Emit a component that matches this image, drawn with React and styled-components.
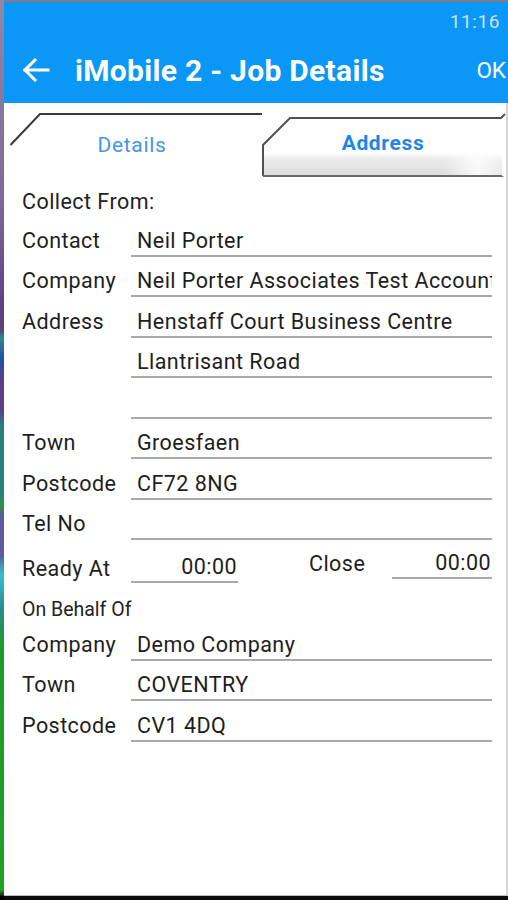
import React from "react";
import styled, { createGlobalStyle } from "styled-components";

const GlobalStyle = createGlobalStyle`
  html, body { margin: 0; padding: 0; background: #000; }
  body { font-family: Roboto, "Noto Sans", "Liberation Sans", sans-serif; }
  * { box-sizing: border-box; }
`;

const Frame = styled.div`
  width: 508px;
  height: 900px;
  display: flex;
  overflow: hidden;
  background: #000;
`;

const LeftEdge = styled.div`
  width: 4px;
  height: 896px;
  flex: none;
  background: linear-gradient(
    to bottom,
    #8f88a6 0px,
    #7d6a98 200px,
    #5e4484 300px,
    #5a3f7c 330px,
    #2a8a8a 338px,
    #2050a8 360px,
    #5a3f8a 380px,
    #5a3f8a 410px,
    #2a7f80 425px,
    #2a7f80 495px,
    #2a9a3a 505px,
    #5a5aa0 515px,
    #5a5aa0 555px,
    #38c0d0 575px,
    #2a8a8a 610px,
    #1f9a2a 645px,
    #22a022 890px,
    #1a1a1a 896px
  );
`;

const Main = styled.div`
  flex: 1;
  display: flex;
  flex-direction: column;
  height: 900px;
`;

const TopStrip = styled.div`
  height: 2px;
  background: #7d7a8c;
`;

const Header = styled.header`
  background: #0b97f5;
  height: 101px;
  display: flex;
  flex-direction: column;
`;

const StatusBar = styled.div`
  height: 38px;
  display: flex;
  align-items: center;
  justify-content: flex-end;
  padding-right: 8px;
  font-size: 19px;
  color: rgba(235, 242, 250, 0.85);
  letter-spacing: 0.6px;
`;

const ActionBar = styled.div`
  height: 63px;
  display: flex;
  align-items: center;
  padding-left: 18px;
  padding-bottom: 3px;
`;

const BackIcon = styled.svg`
  width: 28px;
  height: 24px;
  flex: none;
`;

const Title = styled.h1`
  margin: 0 0 0 25px;
  flex: 1;
  font-size: 30px;
  font-weight: 700;
  letter-spacing: 0.3px;
  color: #fff;
  white-space: nowrap;
`;

const OkButton = styled.span`
  font-size: 22.5px;
  color: #fff;
  padding-right: 2px;
`;

const Body = styled.div`
  flex: 1;
  display: flex;
  flex-direction: column;
  background: #fff;
  border-right: 2px solid #d4d4d4;
  border-bottom: 1px solid #bdbdbd;
`;

const TabStrip = styled.div`
  height: 74px;
  display: flex;
  padding: 10px 0 0 6px;
`;

const Tab = styled.div`
  position: relative;
  width: ${(p) => p.$w}px;
  flex: none;
  display: flex;
  justify-content: center;
  padding-top: ${(p) => p.$top}px;
  padding-right: ${(p) => p.$pr || 0}px;
  font-size: 21px;
  font-weight: ${(p) => (p.$bold ? 700 : 400)};
  color: ${(p) => (p.$bold ? "#1e86e6" : "#4496ea")};
  letter-spacing: 0.65px;
`;

const TabOutline = styled.svg`
  position: absolute;
  inset: 0;
  width: 100%;
  height: 100%;
  pointer-events: none;
`;

const TabLabel = styled.span`
  position: relative;
`;

const Form = styled.div`
  display: flex;
  flex-direction: column;
  padding-left: 18px;
`;

const Heading = styled.div`
  padding-top: 11px;
  line-height: 28px;
  font-size: 21.5px;
  letter-spacing: 0.45px;
  color: #222;
`;

const Row = styled.div`
  height: 40.5px;
  display: grid;
  grid-template-columns: 109px 361px;
  align-items: end;
`;

const Label = styled.span`
  font-size: 21.5px;
  letter-spacing: 0.45px;
  line-height: 28px;
  color: #1e1e1e;
  padding-bottom: ${(p) => (p.$pb === undefined ? 2 : p.$pb)}px;
  white-space: nowrap;
`;

const Field = styled.div`
  font-size: 21.5px;
  letter-spacing: 0.45px;
  line-height: 28px;
  color: #1e1e1e;
  padding-left: 6px;
  padding-bottom: ${(p) => p.$pb || 0}px;
  border-bottom: 2px solid #a9a9a9;
  white-space: nowrap;
  overflow: hidden;
  text-align: ${(p) => (p.$right ? "right" : "left")};
  padding-right: ${(p) => (p.$right ? "1px" : "0")};
  margin-bottom: ${(p) => p.$mb || 0}px;
`;

const TimeRow = styled.div`
  height: 43px;
  display: grid;
  grid-template-columns: 109px 107px 71px 83px 100px;
  align-items: end;
`;

const SubHeading = styled.div`
  padding-top: 17px;
  line-height: 20px;
  font-size: 19.5px;
  color: #222;
`;

const BottomBar = styled.div`
  height: 4px;
  background: #0a0a0a;
  flex: none;
`;

const collect = [
  ["Contact", "Neil Porter"],
  ["Company", "Neil Porter Associates Test Account"],
  ["Address", "Henstaff Court Business Centre"],
  ["", "Llantrisant Road"],
  ["", ""],
  ["Town", "Groesfaen"],
  ["Postcode", "CF72 8NG"],
  ["Tel No", ""],
];

const behalf = [
  ["Company", "Demo Company"],
  ["Town", "COVENTRY"],
  ["Postcode", "CV1 4DQ"],
];

function FieldRow({ label, value }) {
  return (
    <Row>
      <Label>{label}</Label>
      <Field>{value || "\u00a0"}</Field>
    </Row>
  );
}

export default function App() {
  return (
    <>
      <GlobalStyle />
      <Frame>
        <LeftEdge />
        <Main>
          <TopStrip />
          <Header>
            <StatusBar>11:16</StatusBar>
            <ActionBar>
              <BackIcon viewBox="0 0 28 24" fill="none" stroke="#fff" strokeWidth="3" strokeLinecap="square">
                <path d="M3 12 H26" />
                <path d="M13 2 L3 12 L13 22" strokeLinejoin="miter" />
              </BackIcon>
              <Title>iMobile 2 - Job Details</Title>
              <OkButton>OK</OkButton>
            </ActionBar>
          </Header>
          <Body>
            <TabStrip>
              <Tab $w={252} $top={20} $pr={8}>
                <TabOutline viewBox="0 0 252 64" preserveAspectRatio="none">
                  <defs>
                    <linearGradient id="fadeLeft" x1="0" y1="0" x2="0" y2="1">
                      <stop offset="0" stopColor="#555" />
                      <stop offset="1" stopColor="#ddd" />
                    </linearGradient>
                  </defs>
                  <path d="M0.5 32 L30 1 L252 1" stroke="#3a3a3a" strokeWidth="2" fill="none" />
                  <path d="M0.5 32 L0.5 62" stroke="url(#fadeLeft)" strokeWidth="2" fill="none" />
                </TabOutline>
                <TabLabel>Details</TabLabel>
              </Tab>
              <Tab $w={244} $top={18} $pr={2} $bold>
                <TabOutline viewBox="0 0 244 64" preserveAspectRatio="none">
                  <defs>
                    <linearGradient id="tabShade" x1="0" y1="0" x2="0" y2="1">
                      <stop offset="0" stopColor="#fff" />
                      <stop offset="0.6" stopColor="#fff" />
                      <stop offset="0.7" stopColor="#ececec" />
                      <stop offset="1" stopColor="#dcdcdc" />
                    </linearGradient>
                    <linearGradient id="tabGlare" x1="0" y1="0" x2="1" y2="0">
                      <stop offset="0" stopColor="#fff" stopOpacity="0" />
                      <stop offset="0.75" stopColor="#fff" stopOpacity="0" />
                      <stop offset="0.9" stopColor="#fff" stopOpacity="0.8" />
                      <stop offset="1" stopColor="#fff" stopOpacity="0.3" />
                    </linearGradient>
                  </defs>
                  <path d="M0 32 L27 5 L240 5 L240 63 L0 63 Z" fill="url(#tabShade)" />
                  <rect x="0" y="38" width="240" height="25" fill="url(#tabGlare)" />
                  <path d="M1 63 L1 32 L28 5 L239 5 L243 1" stroke="#505050" strokeWidth="2" fill="none" />
                  <path d="M1 63 L239 63 L243 66" stroke="#6a6a6a" strokeWidth="2" fill="none" />
                </TabOutline>
                <TabLabel>Address</TabLabel>
              </Tab>
            </TabStrip>
            <Form>
              <Heading>Collect From:</Heading>
              {collect.map(([l, v], i) => (
                <FieldRow key={i} label={l} value={v} />
              ))}
              <TimeRow>
                <Label $pb={0}>Ready At</Label>
                <Field $right $pb={0}>00:00</Field>
                <span />
                <Label $pb={5}>Close</Label>
                <Field $right $mb={4} $pb={0}>00:00</Field>
              </TimeRow>
              <SubHeading>On Behalf Of</SubHeading>
              {behalf.map(([l, v], i) => (
                <FieldRow key={i} label={l} value={v} />
              ))}
            </Form>
          </Body>
          <BottomBar />
        </Main>
      </Frame>
    </>
  );
}
